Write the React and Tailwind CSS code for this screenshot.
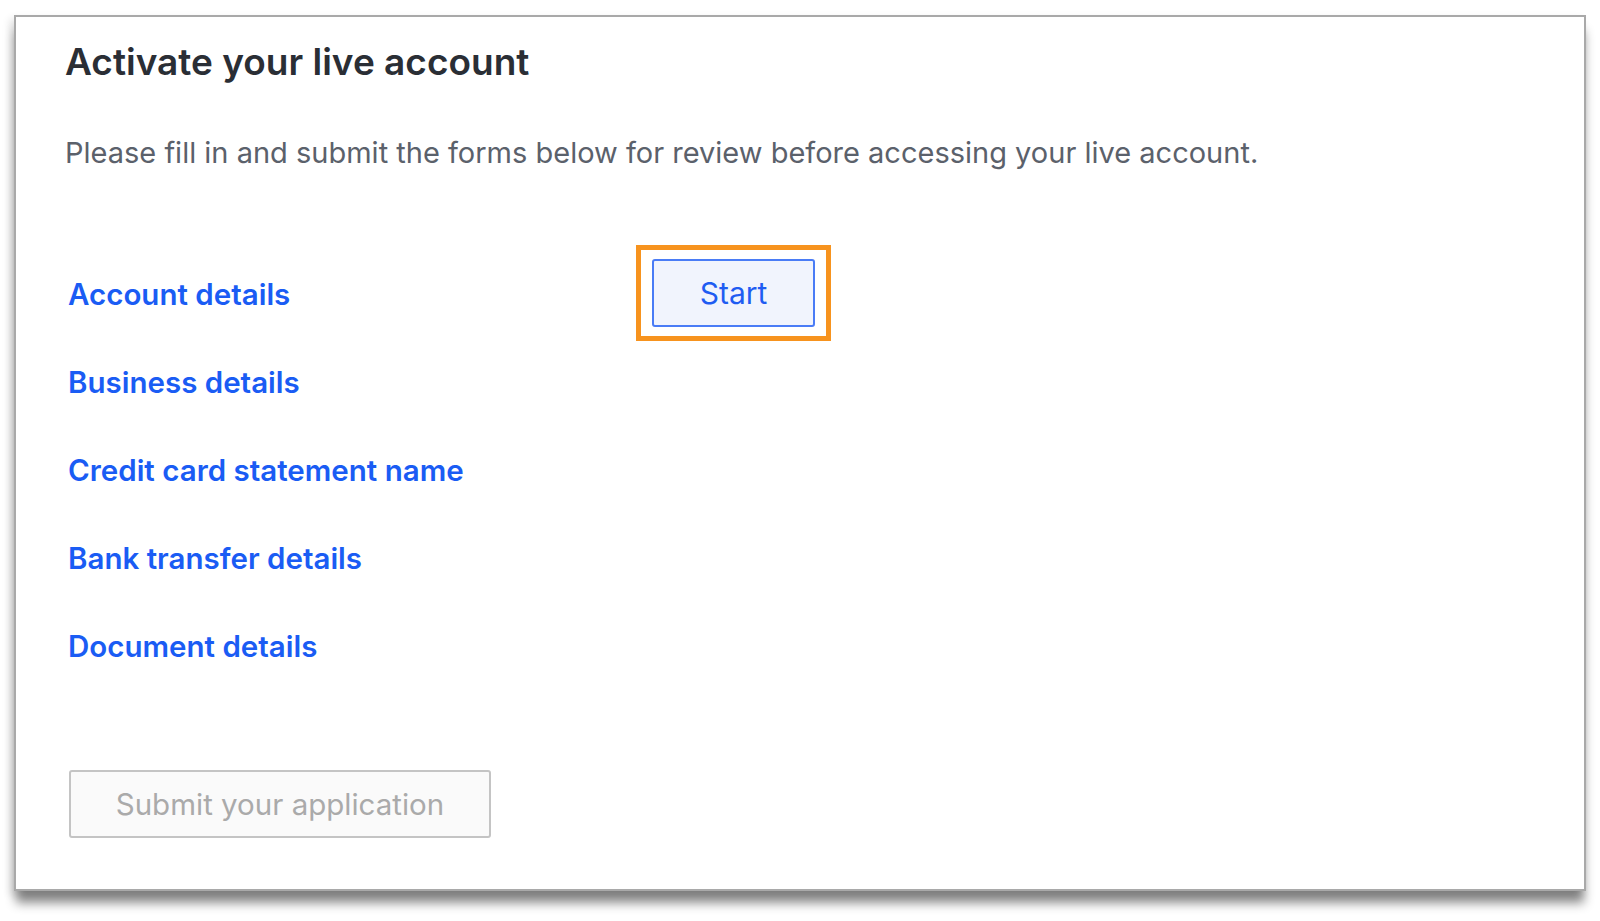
const sections = [
  'Account details',
  'Business details',
  'Credit card statement name',
  'Bank transfer details',
  'Document details',
];

export default function App() {
  return (
    <div className="min-h-[921px] bg-white pl-[14px] pt-[15px] font-['Inter',sans-serif]">
      <div className="flex h-[876px] w-[1572px] flex-col border-2 border-[#a9a9a9] bg-white pl-[49px] shadow-[0_14px_10px_-2px_rgba(0,0,0,0.45),-4px_4px_8px_rgba(0,0,0,0.12)]">
        <h1 className="mt-[23px] text-[37px] font-semibold leading-[44px] text-[#2a2e35]">
          Activate your live account
        </h1>
        <p className="mt-[51px] text-[29px] leading-[36px] text-[#5b616b]">
          Please fill in and submit the forms below for review before accessing your live account.
        </p>

        <div className="mt-[79px] flex flex-col pl-[3px]">
          {sections.map((name, i) => (
            <div key={name} className="flex h-[88px] items-center">
              <a href="#" className="w-[568px] text-[29.5px] font-semibold text-[#1a5cf4]">
                {name}
              </a>
              {i === 0 && (
                <div className="mb-[2px] flex h-[96px] w-[195px] items-center justify-center border-[5px] border-[#f7931e]">
                  <button className="h-[68px] w-[163px] rounded-[3px] border-2 border-[#4a7cf6] bg-[#f1f4fd] text-[30px] text-[#1f5cf2]">
                    Start
                  </button>
                </div>
              )}
            </div>
          ))}
        </div>

        <button
          disabled
          className="mt-[80px] ml-[4px] h-[68px] w-[422px] rounded-[3px] border-2 border-[#c4c4c4] bg-[#fafafa] text-[29.5px] text-[#aaaaaa]"
        >
          Submit your application
        </button>
      </div>
    </div>
  );
}
